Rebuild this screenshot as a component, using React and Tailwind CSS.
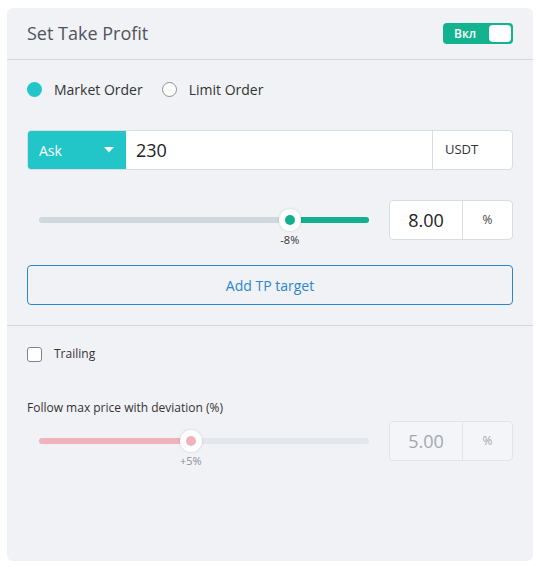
import React, { useState } from 'react';

const font = { fontFamily: '"Open Sans", "Liberation Sans", sans-serif' };

function Slider({ percent, label, fill, track, dot, fillRight, muted }) {
  return (
    <div className="relative flex-1 h-10 mr-5 pl-3">
      <div className="relative h-full">
        <div className={`absolute left-0 right-0 top-1/2 -translate-y-1/2 h-[6px] rounded-full ${track}`} />
        <div
          className={`absolute top-1/2 -translate-y-1/2 h-[6px] rounded-full ${fill}`}
          style={fillRight ? { left: `${percent}%`, right: 0 } : { left: 0, width: `${percent}%` }}
        />
        <div
          className="absolute top-1/2 -translate-x-1/2 -translate-y-1/2 w-[22px] h-[22px] rounded-full bg-white shadow-[0_0_3px_rgba(0,0,0,0.15)] flex items-center justify-center"
          style={{ left: `${percent}%` }}
        >
          <div className={`w-[10px] h-[10px] rounded-full ${dot}`} />
        </div>
        <div
          className={`absolute top-[34px] -translate-x-1/2 text-[11px] leading-none ${muted ? 'text-[#8a8f96]' : 'text-[#333]'}`}
          style={{ left: `${percent}%` }}
        >
          {label}
        </div>
      </div>
    </div>
  );
}

function PercentBox({ value, disabled }) {
  return (
    <div className={`flex w-[124px] h-10 rounded border ${disabled ? 'bg-[#f4f5f8] border-[#e1e4e8]' : 'bg-white border-[#d8dde3]'}`}>
      <div className={`w-[72px] flex items-center justify-center text-[18px] ${disabled ? 'text-[#a3a8ae]' : 'text-[#222]'}`}>{value}</div>
      <div className={`flex-1 flex items-center justify-center text-[12px] border-l ${disabled ? 'text-[#a3a8ae] border-[#e1e4e8]' : 'text-[#444] border-[#d8dde3]'}`}>%</div>
    </div>
  );
}

export default function App() {
  const [orderType, setOrderType] = useState('market');
  const [price, setPrice] = useState('230');

  return (
    <div className="w-[541px] h-[568px] bg-white pt-[8px] pl-[7px]" style={font}>
      <div className="w-[526px] h-[553px] rounded-md bg-[#f1f2f6]">
        <div className="h-[52px] px-5 flex items-center justify-between border-b border-[#d4d8de]">
          <span className="text-[18px] text-[#50545b]">Set Take Profit</span>
          <button className="w-[70px] h-[21px] rounded bg-[#13b38f] flex items-center justify-between pl-[11px] pr-[2px]">
            <span className="text-[12px] font-semibold text-white leading-none">Вкл</span>
            <span className="w-[22px] h-[17px] rounded-[4px] bg-white" />
          </button>
        </div>

        <div className="px-5 pt-[19px] pb-5 border-b border-[#d4d8de]">
          <div className="flex items-center h-5 text-[14px] text-[#333]">
            <button className="flex items-center gap-3" onClick={() => setOrderType('market')}>
              <span className={`w-[15px] h-[15px] rounded-full ${orderType === 'market' ? 'bg-[#22c6c8]' : 'bg-white border border-[#8a9099]'}`} />
              <span>Market Order</span>
            </button>
            <button className="flex items-center gap-3 ml-[19px]" onClick={() => setOrderType('limit')}>
              <span className={`w-[15px] h-[15px] rounded-full ${orderType === 'limit' ? 'bg-[#22c6c8]' : 'bg-white border border-[#8a9099]'}`} />
              <span>Limit Order</span>
            </button>
          </div>

          <div className="flex h-10 mt-[31px] rounded border border-[#d8dde3] bg-white overflow-hidden">
            <div className="w-[99px] bg-[#23c6c8] flex items-center justify-between pl-3 pr-[12px] text-white text-[14px] -my-px -ml-px">
              <span>Ask</span>
              <svg width="10" height="6" viewBox="0 0 10 6"><path d="M0 0 L10 0 L5 5.5 Z" fill="#fff" /></svg>
            </div>
            <input
              className="flex-1 min-w-0 px-[10px] text-[18px] text-[#222] outline-none bg-white"
              value={price}
              onChange={(e) => setPrice(e.target.value)}
            />
            <div className="w-[80px] border-l border-[#d8dde3] flex items-center pl-3 text-[13px] text-[#333]">USDT</div>
          </div>

          <div className="flex items-center mt-[30px]">
            <Slider percent={76} label="-8%" fill="bg-[#12b08f]" track="bg-[#cfd8dd]" dot="bg-[#12b08f]" fillRight />
            <PercentBox value="8.00" />
          </div>

          <button className="w-full h-10 mt-[25px] rounded border border-[#2b86cf] text-[14px] text-[#2b86cf]">
            Add TP target
          </button>
        </div>

        <div className="px-5 pt-5">
          <label className="flex items-center gap-3 h-4 text-[12px] text-[#333]">
            <span className="w-[15px] h-[15px] rounded-[3px] border border-[#7d848d] bg-white" />
            <span>Trailing</span>
          </label>

          <div className="mt-[38px] text-[12px] text-[#333] leading-4">Follow max price with deviation (%)</div>

          <div className="flex items-center mt-[5px]">
            <Slider percent={46} label="+5%" fill="bg-[#f1b3bb]" track="bg-[#e3e7eb]" dot="bg-[#f1b3bb]" muted />
            <PercentBox value="5.00" disabled />
          </div>
        </div>
      </div>
    </div>
  );
}
